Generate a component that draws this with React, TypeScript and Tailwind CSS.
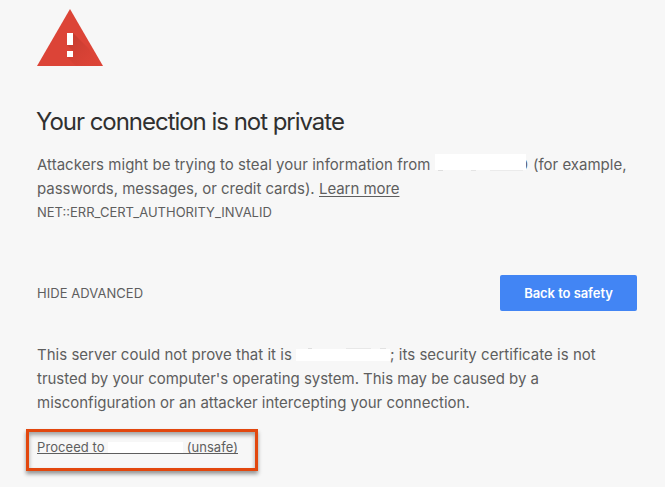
import React from 'react';

function WarningIcon() {
  return (
    <svg className="mt-[9px] block h-[57px] w-[66px]" viewBox="0 0 66 57" aria-label="Warning">
      <defs>
        <linearGradient id="shade" gradientUnits="userSpaceOnUse" x1="33" y1="28" x2="56" y2="51">
          <stop offset="0" stopColor="#b5352a" stopOpacity="0.6" />
          <stop offset="1" stopColor="#cf3d30" stopOpacity="0.1" />
        </linearGradient>
      </defs>
      <path d="M33 0L66 57H0Z" fill="#dc4437" />
      <path d="M36 24L51.8 39.8L61.7 57H51L30 36H36ZM36 42L51 57H39L30 48H36Z" fill="url(#shade)" />
      <path d="M30 24h6v12h-6zM30 42h6v6h-6z" fill="#fff" />
    </svg>
  );
}

export default function App() {
  return (
    <main className="h-[487px] w-[665px] overflow-hidden bg-[#f7f7f7] pl-[37px] font-['Inter','Liberation_Sans',sans-serif] text-[15px] leading-[24px] text-[#5e5e5e]">
      <WarningIcon />
      <h1 className="-ml-px mt-[40px] h-[32px] whitespace-nowrap text-[24px] leading-[32px] tracking-[-1.03px] text-[#303030]">Your connection is not private</h1>

      <div className="mt-[15px] whitespace-nowrap">
        <div className="flex h-[24px]">
          <span className="w-[398px] tracking-[0.03px]">Attackers might be trying to steal your information from</span>
          <span className="relative h-[24px] w-[93px] text-right">
            0
            <span className="absolute left-0 top-[1px] h-[16px] w-[91px] bg-white" />
            <span className="absolute left-[3px] top-[17px] h-px w-[5px] bg-[#dedede]" />
            <span className="absolute left-[36px] top-[17px] h-px w-[5px] bg-[#e4e4e4]" />
            <span className="absolute left-[55px] top-[17px] h-px w-[33px] bg-[#ebebeb]" />
          </span>
          <span className="ml-[5px]">(for example,</span>
        </div>
        <div className="flex h-[24px]">
          <span className="w-[282px] tracking-[-0.04px]">passwords, messages, or credit cards).</span>
          <span className="tracking-[-0.06px] underline underline-offset-2">Learn more</span>
        </div>
        <div className="h-[24px] text-[13px] leading-[22px]">NET::ERR_CERT_AUTHORITY_INVALID</div>
      </div>

      <div className="mt-[50px] flex h-[36px] w-[600px] items-center justify-between">
        <span className="pb-px text-[13px] tracking-[0.05px]">HIDE ADVANCED</span>
        <button className="h-[36px] w-[137px] rounded-[2px] bg-[#4285f4] text-[13px] font-semibold tracking-[-0.06px] text-white">Back to safety</button>
      </div>

      <div className="mt-[32px] whitespace-nowrap">
        <div className="flex h-[24px]">
          <span className="w-[259px] tracking-[0.02px]">This server could not prove that it is</span>
          <span className="relative mt-[6px] h-[12px] w-[94px] bg-white">
            <span className="absolute -top-px left-[12px] h-px w-[4px] bg-[#dedede]" />
            <span className="absolute -top-px left-[50px] h-px w-[25px] bg-[#e8e8e8]" />
            <span className="absolute -top-px left-[84px] h-px w-[6px] bg-[#e2e2e2]" />
          </span>
          <span className="tracking-[0.02px]">; its security certificate is not</span>
        </div>
        <div className="h-[24px] tracking-[-0.03px]">trusted by your computer's operating system. This may be caused by a</div>
        <div className="h-[24px]">misconfiguration or an attacker intercepting your connection.</div>
      </div>

      <div className="-ml-[11px] mt-[14px] h-[42px] w-[232px] border-[3px] border-[#e2470e] pl-[8px] pt-[8px] text-[13px] leading-[15px] shadow-[0_3px_4px_rgba(0,0,0,0.4),inset_0_3px_4px_rgba(0,0,0,0.35)]">
        <a className="flex h-[14px] w-[201px] whitespace-nowrap border-b border-[#5e5e5e]">
          <span className="w-[71px] tracking-[0.08px]">Proceed to</span>
          <span className="mt-[2px] h-[11px] w-[75px] bg-white" />
          <span className="ml-[4px] tracking-[0.06px]">(unsafe)</span>
        </a>
      </div>
    </main>
  );
}
